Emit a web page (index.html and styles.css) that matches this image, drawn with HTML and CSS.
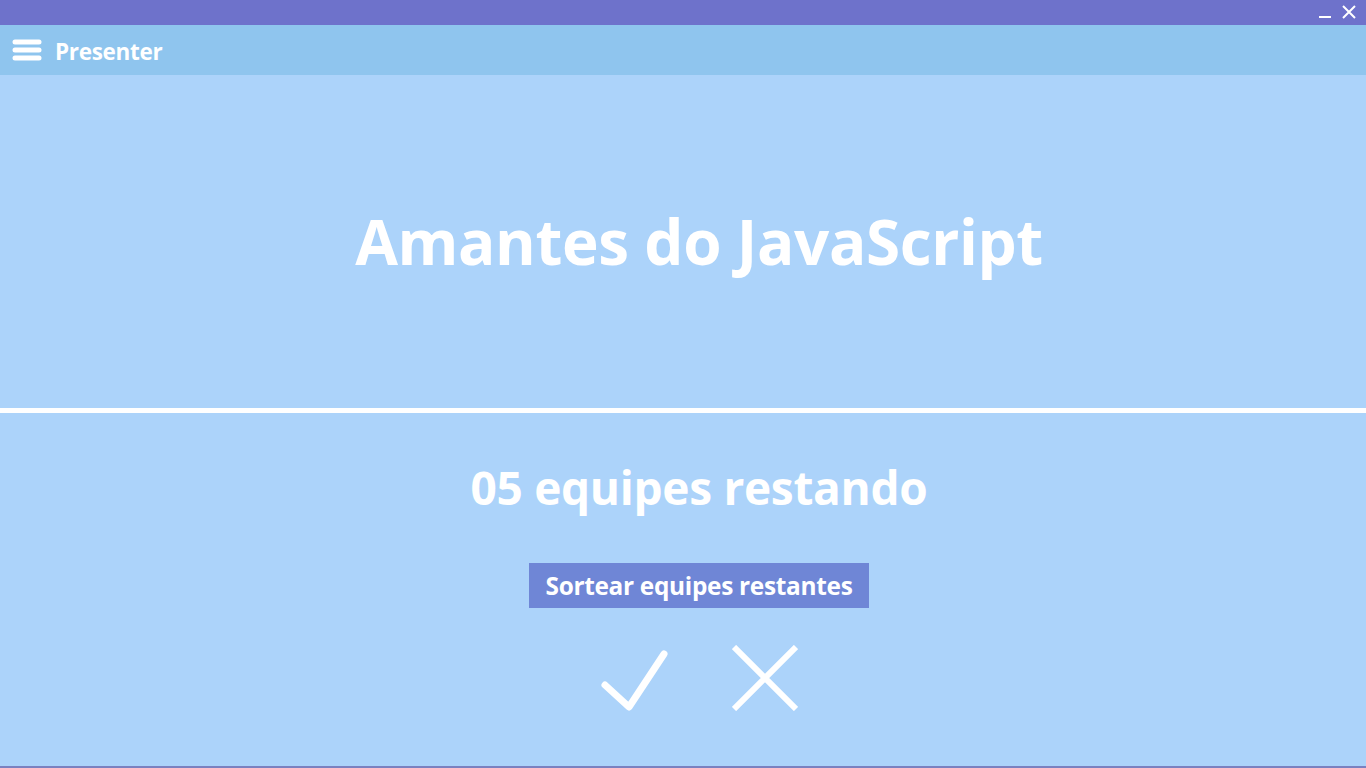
FILE: index.html
```html
<!DOCTYPE html>
<html lang="pt">
<head>
<meta charset="utf-8">
<title>Presenter</title>
<link rel="stylesheet" href="styles.css">
</head>
<body>
<div class="window">
  <div class="titlebar">
    <span class="win-btn min"><svg width="14" height="14" viewBox="0 0 14 14"><rect x="1" y="11" width="12" height="2" fill="#fff"/></svg></span>
    <span class="win-btn close"><svg width="14" height="14" viewBox="0 0 14 14"><path d="M1 1L13 13M13 1L1 13" stroke="#fff" stroke-width="2"/></svg></span>
  </div>
  <header class="appbar">
    <svg class="menu-icon" width="30" height="22" viewBox="0 0 30 22"><g stroke="#fff" stroke-width="5" stroke-linecap="round"><line x1="3" y1="3" x2="27" y2="3"/><line x1="3" y1="11" x2="27" y2="11"/><line x1="3" y1="19" x2="27" y2="19"/></g></svg>
    <span class="app-title">Presenter</span>
  </header>
  <main class="content">
    <section class="team">
      <h1 class="team-name">Amantes do JavaScript</h1>
    </section>
    <div class="divider"></div>
    <section class="controls">
      <h2 class="remaining">05 equipes restando</h2>
      <button class="draw-btn">Sortear equipes restantes</button>
      <div class="actions">
        <svg class="icon-check" width="70" height="66" viewBox="0 0 70 66"><path d="M5 37L29 59L64 6" fill="none" stroke="#fff" stroke-width="7" stroke-linecap="round" stroke-linejoin="round"/></svg>
        <svg class="icon-x" width="66" height="66" viewBox="0 0 66 66"><path d="M2 2L64 64M64 2L2 64" fill="none" stroke="#fff" stroke-width="6"/></svg>
      </div>
    </section>
  </main>
</div>
</body>
</html>
```
FILE: styles.css
```css
* { box-sizing: border-box; }
html, body { margin: 0; padding: 0; height: 100%; }
body {
  font-family: "Open Sans", "Noto Sans", sans-serif;
  background: #acd3fa;
  overflow: hidden;
}
.window {
  display: flex;
  flex-direction: column;
  height: 768px;
  border-bottom: 2px solid #7a81c0;
}
.titlebar {
  height: 25px;
  background: #6e72cb;
  display: flex;
  justify-content: flex-end;
  align-items: flex-start;
  padding-right: 10px;
  gap: 10px;
  flex: none;
}
.win-btn { display: flex; padding-top: 5px; }
.appbar {
  height: 50px;
  background: #8fc5ee;
  display: flex;
  align-items: center;
  padding-left: 12px;
  gap: 13px;
  flex: none;
}
.menu-icon { display: block; }
.app-title {
  color: #fff;
  font-weight: 700;
  font-size: 22.5px;
  letter-spacing: -0.3px;
  margin-top: 2px;
}
.content {
  flex: 1;
  display: flex;
  flex-direction: column;
}
.team {
  height: 333px;
  display: flex;
  align-items: center;
  justify-content: center;
  padding-left: 32px;
}
.team-name {
  margin: 0;
  color: #fff;
  font-weight: 700;
  font-size: 62px;
  letter-spacing: -0.4px;
  padding-bottom: 2px;
}
.divider {
  height: 5px;
  background: #fff;
  flex: none;
}
.controls {
  flex: 1;
  display: flex;
  flex-direction: column;
  align-items: center;
  padding-left: 32px;
}
.remaining {
  margin: 44px 0 0;
  color: #fff;
  font-weight: 700;
  font-size: 46px;
  line-height: 60px;
  letter-spacing: -0.3px;
}
.draw-btn {
  margin-top: 46px;
  width: 340px;
  height: 45px;
  border: none;
  background: #6f86d6;
  color: #fff;
  font-family: inherit;
  font-weight: 700;
  font-size: 24.4px;
  letter-spacing: -0.3px;
  padding: 0;
}
.actions {
  margin-top: 37px;
  display: flex;
  gap: 62px;
  align-items: flex-start;
}
.icon-check { margin-top: 3px; }
```
